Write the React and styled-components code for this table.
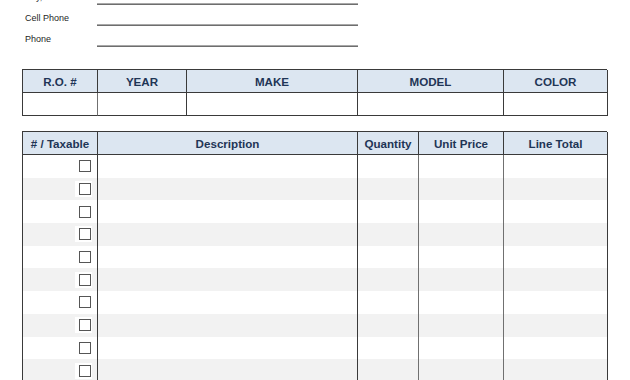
import React from 'react';
import styled, { createGlobalStyle } from 'styled-components';

const GlobalStyle = createGlobalStyle`
  html, body {
    margin: 0;
    padding: 0;
    background: #ffffff;
  }
  body {
    font-family: "Liberation Sans", Arial, sans-serif;
    overflow: hidden;
  }
`;

const Page = styled.div`
  width: 630px;
  height: 380px;
  overflow: hidden;
  padding-left: 22px;
  box-sizing: border-box;
`;

const Form = styled.div`
  margin-top: -16px;
  display: flex;
  flex-direction: column;
`;

const FieldRow = styled.div`
  display: grid;
  grid-template-columns: 75px 261px;
  height: 21px;
  align-items: end;
`;

const Label = styled.div`
  font-size: 9px;
  line-height: 12px;
  color: #1e1e1e;
  padding-left: 3px;
  margin-bottom: 2px;
`;

const Line = styled.div`
  height: 1px;
  border-bottom: 1px solid #6e6e6e;
  background: #a8a8a8;
`;

const Grid = styled.div`
  display: grid;
  grid-template-columns: ${p => p.cols};
  width: 585px;
  margin-top: ${p => p.top}px;
  border-top: 1px solid #3a3a3a;
  border-left: 1px solid #3a3a3a;
  box-sizing: border-box;
`;

const HeadCell = styled.div`
  height: 23px;
  box-sizing: border-box;
  background: #dce6f1;
  border-right: 1px solid #3a3a3a;
  border-bottom: 1px solid #3a3a3a;
  display: flex;
  align-items: center;
  justify-content: center;
  font-weight: bold;
  font-size: 11.6px;
  color: #1f3556;
  white-space: nowrap;
`;

const Cell = styled.div`
  height: ${p => p.h || 23}px;
  box-sizing: border-box;
  background: ${p => (p.shade ? '#f2f2f2' : '#ffffff')};
  border-right: 1px solid ${p => (p.soft ? '#707070' : '#3a3a3a')};
  border-bottom: ${p => (p.noBottom ? 'none' : '1px solid #3a3a3a')};
  display: flex;
  align-items: center;
  justify-content: flex-end;
  padding-right: 5px;
`;

const BoxWrap = styled.span`
  background: #ffffff;
  padding: 2px 1px 2px 4px;
  display: flex;
`;

const Check = styled.span`
  width: 12px;
  height: 12px;
  box-sizing: border-box;
  border: 1.5px solid #555555;
  background: #ffffff;
`;

const vehicleCols = '75px 89px 171px 146px 104px';
const vehicleHead = ['R.O. #', 'YEAR', 'MAKE', 'MODEL', 'COLOR'];

const itemCols = '75px 260px 61px 85px 104px';
const itemHead = ['# / Taxable', 'Description', 'Quantity', 'Unit Price', 'Line Total'];

const fields = ['City, ST ZIP', 'Cell Phone', 'Phone'];

export default function App() {
  const rows = Array.from({ length: 10 }, (_, i) => i);
  return (
    <>
      <GlobalStyle />
      <Page>
        <Form>
          {fields.map(f => (
            <FieldRow key={f}>
              <Label>{f}</Label>
              <Line />
            </FieldRow>
          ))}
        </Form>

        <Grid cols={vehicleCols} top={22}>
          {vehicleHead.map(h => <HeadCell key={h}>{h}</HeadCell>)}
          {vehicleHead.map((h, i) => <Cell key={'v' + h} soft={i === 0} />)}
        </Grid>

        <Grid cols={itemCols} top={15}>
          {itemHead.map(h => <HeadCell key={h}>{h}</HeadCell>)}
          {rows.map(r =>
            itemHead.map((h, c) => (
              <Cell key={r + h} h={22.7} shade={r % 2 === 1} noBottom soft={c === 2 || c === 3}>
                {c === 0 && (
                  <BoxWrap>
                    <Check />
                  </BoxWrap>
                )}
              </Cell>
            ))
          )}
        </Grid>
      </Page>
    </>
  );
}
